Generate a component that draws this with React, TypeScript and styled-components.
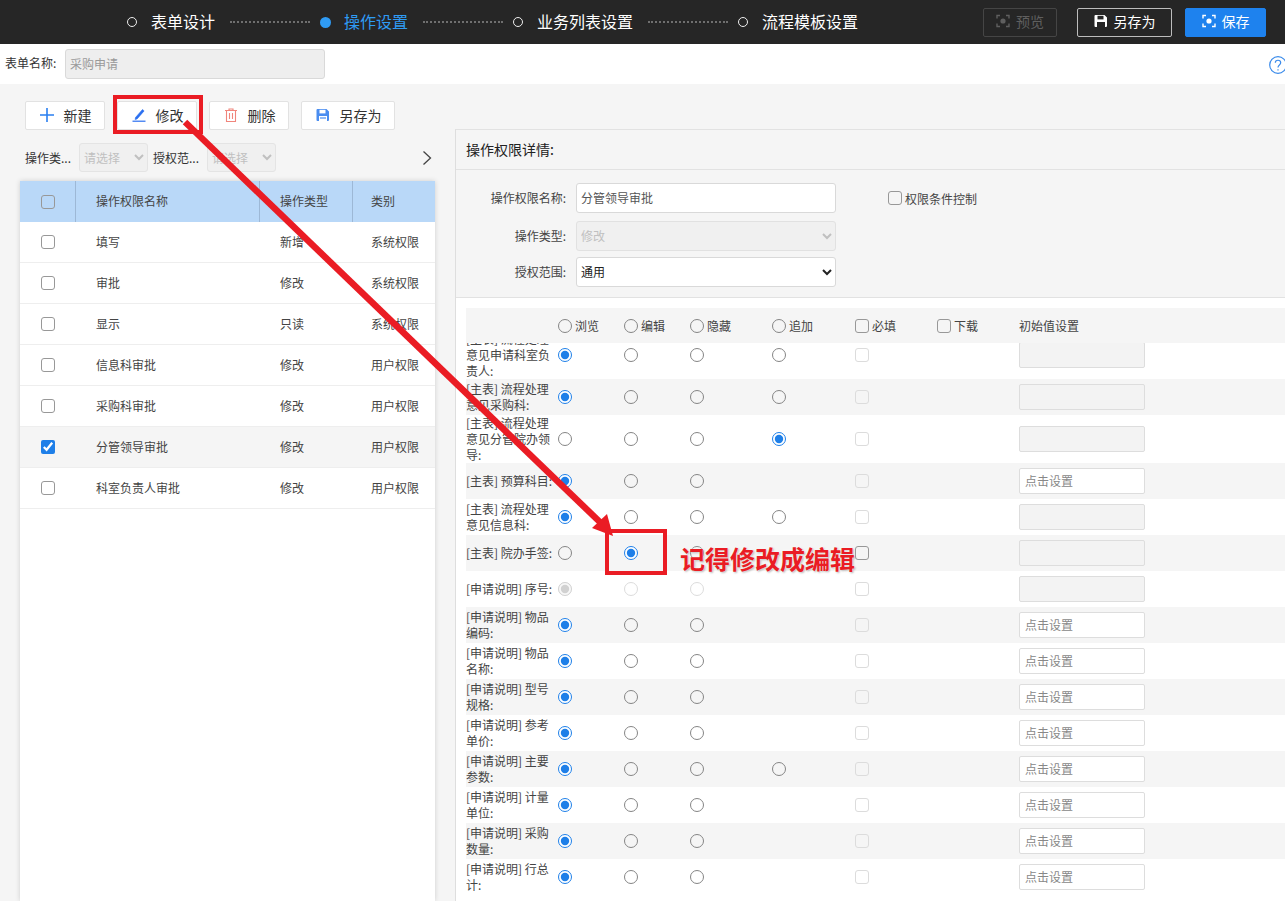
import styled, { createGlobalStyle } from 'styled-components';

const GlobalStyle = createGlobalStyle`
  html, body {
    margin: 0;
    padding: 0;
    background: #fff;
  }

  body, input, select, button {
    font-family: "Noto Sans CJK SC", "Noto Sans", sans-serif;
  }

  * {
    box-sizing: border-box;
  }
`;

type Step = { label: string; active?: boolean };
type PermissionRow = { name: string; type: string; category: string; selected?: boolean };
type FieldRow = {
  label: string;
  checked: number;
  radios: number;
  setting: boolean;
  disabled?: boolean;
  required?: boolean;
};

const steps: Step[] = [
  { label: '表单设计' },
  { label: '操作设置', active: true },
  { label: '业务列表设置' },
  { label: '流程模板设置' },
];

const permissions: PermissionRow[] = [
  { name: '填写', type: '新增', category: '系统权限' },
  { name: '审批', type: '修改', category: '系统权限' },
  { name: '显示', type: '只读', category: '系统权限' },
  { name: '信息科审批', type: '修改', category: '用户权限' },
  { name: '采购科审批', type: '修改', category: '用户权限' },
  { name: '分管领导审批', type: '修改', category: '用户权限', selected: true },
  { name: '科室负责人审批', type: '修改', category: '用户权限' },
];

const fields: FieldRow[] = [
  { label: '[主表] 流程处理意见申请科室负责人:', checked: 0, radios: 4, setting: false },
  { label: '[主表] 流程处理意见采购科:', checked: 0, radios: 4, setting: false },
  { label: '[主表] 流程处理意见分管院办领导:', checked: 3, radios: 4, setting: false },
  { label: '[主表] 预算科目:', checked: 0, radios: 3, setting: true },
  { label: '[主表] 流程处理意见信息科:', checked: 0, radios: 4, setting: false },
  { label: '[主表] 院办手签:', checked: 1, radios: 3, setting: false, required: true },
  { label: '[申请说明] 序号:', checked: 0, radios: 3, setting: false, disabled: true },
  { label: '[申请说明] 物品编码:', checked: 0, radios: 3, setting: true },
  { label: '[申请说明] 物品名称:', checked: 0, radios: 3, setting: true },
  { label: '[申请说明] 型号规格:', checked: 0, radios: 3, setting: true },
  { label: '[申请说明] 参考单价:', checked: 0, radios: 3, setting: true },
  { label: '[申请说明] 主要参数:', checked: 0, radios: 4, setting: true },
  { label: '[申请说明] 计量单位:', checked: 0, radios: 3, setting: true },
  { label: '[申请说明] 采购数量:', checked: 0, radios: 3, setting: true },
  { label: '[申请说明] 行总计:', checked: 0, radios: 3, setting: true },
];

const ScanIcon = () => (
  <svg width="14" height="14" viewBox="0 0 14 14" fill="none" stroke="currentColor" strokeWidth="1.4">
    <path d="M1 4.5V1.5h3M10 1.5h3v3M13 9.5v3h-3M4 12.5H1v-3" />
    <circle cx="7" cy="7" r="2.6" fill="currentColor" stroke="none" />
  </svg>
);

const SaveIcon = ({ color }: { color: string }) => (
  <svg width="14" height="14" viewBox="0 0 14 14">
    <path d="M1.5 1h9l2.5 2.5V12a1 1 0 0 1-1 1H1.5a1 1 0 0 1-1-1V2a1 1 0 0 1 1-1z" fill={color} />
    <rect x="3.5" y="1.8" width="6" height="3.6" fill="#fff" />
    <rect x="3" y="8" width="8" height="5" fill="#fff" />
    <rect x="4" y="9.4" width="6" height="1.2" fill={color} />
  </svg>
);

const PlusIcon = () => (
  <svg width="14" height="14" viewBox="0 0 14 14" stroke="#2a7ff0" strokeWidth="1.6">
    <path d="M7 0v14M0 7h14" />
  </svg>
);

const PenIcon = () => (
  <svg width="14" height="14" viewBox="0 0 14 14" fill="none" stroke="#2a6ff0">
    <path d="M3.5 9.5 10.5 1.5l1.6 1.4-7 8-2 .6z" fill="#2a6ff0" strokeWidth="0.6" />
    <path d="M0.5 13.2h13" strokeWidth="1.2" />
  </svg>
);

const TrashIcon = () => (
  <svg width="14" height="14" viewBox="0 0 14 14" fill="none" stroke="#f0857c" strokeWidth="1.1">
    <path d="M1 2.5h12M5 2.5V1h4v1.5M2.5 2.5v11h9v-11M5.5 5v6M8.5 5v6" />
  </svg>
);

const ChevronRight = () => (
  <svg width="10" height="16" viewBox="0 0 10 16" fill="none" stroke="#444" strokeWidth="1.3">
    <path d="M1.5 1.5 8.5 8l-7 6.5" />
  </svg>
);

const HelpIcon = () => (
  <svg width="18" height="20" viewBox="0 0 18 20" fill="none" stroke="#3b8bea" strokeWidth="1.2">
    <circle cx="9" cy="10" r="8.3" />
    <path d="M6.3 7.8c0-3.4 5.4-3.4 5.4 0 0 2.2-2.7 2.2-2.7 4.6" />
    <path d="M9 14.2v1.4" />
  </svg>
);

export default function App() {
  return (
    <Page>
      <GlobalStyle />

      <TopBar>
        <Stepper>
          {steps.map((step, index) => (
            <StepItem key={step.label}>
              {index > 0 && <StepLine />}
              <StepDot $active={step.active} />
              <StepLabel $active={step.active}>{step.label}</StepLabel>
            </StepItem>
          ))}
        </Stepper>
        <TopActions>
          <TopButton $variant="disabled">
            <ScanIcon />
            预览
          </TopButton>
          <TopButton $variant="outline">
            <SaveIcon color="#fff" />
            另存为
          </TopButton>
          <TopButton $variant="primary">
            <ScanIcon />
            保存
          </TopButton>
        </TopActions>
      </TopBar>

      <NameRow>
        <NameLabel>表单名称:</NameLabel>
        <NameInput disabled defaultValue="采购申请" />
        <HelpWrap>
          <HelpIcon />
        </HelpWrap>
      </NameRow>

      <Workspace>
        <LeftColumn>
          <Toolbar>
            <ToolButton $width={80}>
              <PlusIcon />
              新建
            </ToolButton>
            <ToolButton $width={80}>
              <PenIcon />
              修改
            </ToolButton>
            <ToolButton $width={80}>
              <TrashIcon />
              删除
            </ToolButton>
            <ToolButton $width={94}>
              <SaveIcon color="#4a8df0" />
              另存为
            </ToolButton>
          </Toolbar>

          <FilterRow>
            <FilterLabel>操作类...</FilterLabel>
            <FilterSelect disabled>
              <option>请选择</option>
            </FilterSelect>
            <FilterLabel>授权范...</FilterLabel>
            <FilterSelect disabled>
              <option>请选择</option>
            </FilterSelect>
            <FilterToggle>
              <ChevronRight />
            </FilterToggle>
          </FilterRow>

          <PermissionTable>
            <PermissionHead>
              <CheckCell $divider>
                <input type="checkbox" />
              </CheckCell>
              <HeadText $divider>操作权限名称</HeadText>
              <HeadText $divider>操作类型</HeadText>
              <HeadText>类别</HeadText>
            </PermissionHead>
            {permissions.map((row) => (
              <PermissionItem key={row.name} $selected={row.selected}>
                <CheckCell>
                  <input type="checkbox" defaultChecked={row.selected} />
                </CheckCell>
                <BodyText>{row.name}</BodyText>
                <BodyText>{row.type}</BodyText>
                <BodyText>{row.category}</BodyText>
              </PermissionItem>
            ))}
          </PermissionTable>
        </LeftColumn>

        <DetailPanel>
          <DetailTitle>操作权限详情:</DetailTitle>
          <DetailForm>
            <FormRow>
              <FormLabel>操作权限名称:</FormLabel>
              <FormInput defaultValue="分管领导审批" />
              <ConditionLabel>
                <input type="checkbox" />
                权限条件控制
              </ConditionLabel>
            </FormRow>
            <FormRow>
              <FormLabel>操作类型:</FormLabel>
              <FormSelect disabled>
                <option>修改</option>
              </FormSelect>
            </FormRow>
            <FormRow>
              <FormLabel>授权范围:</FormLabel>
              <FormSelect>
                <option>通用</option>
              </FormSelect>
            </FormRow>
          </DetailForm>

          <FieldArea>
            <FieldHead>
              <span />
              <HeadOption>
                <input type="radio" name="all" />
                浏览
              </HeadOption>
              <HeadOption>
                <input type="radio" name="all" />
                编辑
              </HeadOption>
              <HeadOption>
                <input type="radio" name="all" />
                隐藏
              </HeadOption>
              <HeadOption>
                <input type="radio" name="all" />
                追加
              </HeadOption>
              <HeadOption>
                <input type="checkbox" />
                必填
              </HeadOption>
              <HeadOption>
                <input type="checkbox" />
                下载
              </HeadOption>
              <span>初始值设置</span>
            </FieldHead>

            <FieldScroller>
              <FieldList>
                {fields.map((field, rowIndex) => (
                  <FieldItem key={field.label} $shaded={rowIndex % 2 === 1}>
                    <FieldLabel>{field.label}</FieldLabel>
                    {[0, 1, 2, 3].map((option) => (
                      <RadioCell key={option}>
                        {option < field.radios && (
                          <input
                            type="radio"
                            name={`field-${rowIndex}`}
                            defaultChecked={field.checked === option}
                            disabled={field.disabled}
                          />
                        )}
                      </RadioCell>
                    ))}
                    <RadioCell>
                      <input type="checkbox" disabled={!field.required} />
                    </RadioCell>
                    <span />
                    <SettingInput disabled={!field.setting} placeholder={field.setting ? '点击设置' : ''} />
                  </FieldItem>
                ))}
              </FieldList>
            </FieldScroller>
          </FieldArea>
        </DetailPanel>
      </Workspace>

      <Annotations width="1285" height="901" viewBox="0 0 1285 901">
        <rect x="115" y="97" width="86" height="35" fill="none" stroke="#ea1c24" strokeWidth="4" />
        <rect x="607" y="531" width="58" height="42" fill="none" stroke="#ea1c24" strokeWidth="4" />
        <line x1="185" y1="122" x2="604" y2="526" stroke="#ea1c24" strokeWidth="6.5" />
        <polygon points="613,536 592,528 607,514" fill="#ea1c24" />
      </Annotations>
      <AnnotationText>记得修改成编辑</AnnotationText>
    </Page>
  );
}

const Page = styled.div`
  position: relative;
  width: 1285px;
  height: 901px;
  overflow: hidden;
  display: flex;
  flex-direction: column;
  color: #333;
  font-size: 12px;

  input[type='checkbox'],
  input[type='radio'] {
    accent-color: #1e7fe8;
    margin: 0;
    width: 14px;
    height: 14px;
  }

  input[type='checkbox']:not(:checked),
  input[type='radio']:not(:checked) {
    appearance: none;
    background: transparent;
    border: 1px solid #858585;
  }

  input[type='checkbox']:not(:checked) {
    border-radius: 3px;
    border-color: #989898;
    border-width: 1.5px;
  }

  input[type='radio']:not(:checked) {
    border-radius: 50%;
  }

  input[type='checkbox']:disabled,
  input[type='radio']:disabled {
    border-color: #dcdcdc;
  }
`;

const TopBar = styled.header`
  height: 44px;
  flex: none;
  background: #262626;
  display: flex;
  align-items: center;
  padding: 0 19px 0 127px;
`;

const Stepper = styled.div`
  display: flex;
  align-items: center;
`;

const StepItem = styled.div`
  display: flex;
  align-items: center;
`;

const StepLine = styled.span`
  width: 80px;
  margin: 0 10px 0 15px;
  border-top: 2px dotted #6f6f6f;
`;

const StepDot = styled.span<{ $active?: boolean }>`
  width: ${(p) => (p.$active ? '11px' : '10px')};
  height: ${(p) => (p.$active ? '11px' : '10px')};
  border-radius: 50%;
  border: ${(p) => (p.$active ? 'none' : '1.5px solid #eee')};
  background: ${(p) => (p.$active ? '#2f9bf4' : 'transparent')};
  margin-right: ${(p) => (p.$active ? '13px' : '14px')};
`;

const StepLabel = styled.span<{ $active?: boolean }>`
  font-size: 16px;
  line-height: 42px;
  padding-bottom: 2px;
  color: ${(p) => (p.$active ? '#2f9bf4' : '#fff')};
`;

const TopActions = styled.div`
  margin-left: auto;
  display: flex;
  align-items: center;
  gap: 20px;

  button:last-child {
    margin-left: -7px;
  }
`;

const TopButton = styled.button<{ $variant: 'disabled' | 'outline' | 'primary' }>`
  height: 29px;
  padding: 0 0 2px;
  width: ${(p) => (p.$variant === 'outline' ? '95px' : p.$variant === 'primary' ? '81px' : '74px')};
  display: flex;
  align-items: center;
  justify-content: center;
  gap: 6px;
  font-size: 14px;
  border-radius: 2px;
  border: 1px solid
    ${(p) => (p.$variant === 'outline' ? '#bdbdbd' : p.$variant === 'primary' ? '#1e82ee' : '#454545')};
  background: ${(p) => (p.$variant === 'primary' ? '#1e82ee' : 'transparent')};
  color: ${(p) => (p.$variant === 'disabled' ? '#5f5f5f' : '#fff')};

  svg rect {
    fill: ${(p) => (p.$variant === 'outline' ? '#262626' : undefined)};
  }
`;

const NameRow = styled.div`
  height: 40px;
  flex: none;
  display: flex;
  align-items: center;
  padding-left: 5px;
  background: #fff;
`;

const NameLabel = styled.label`
  width: 60px;
  font-size: 12px;
  padding-bottom: 3px;
`;

const NameInput = styled.input`
  width: 260px;
  height: 30px;
  padding: 0 4px 2px;
  font-size: 12px;
  background: #eee;
  color: #999;
  border: 1px solid #d9d9d9;
  border-radius: 3px;
`;

const HelpWrap = styled.span`
  margin-left: auto;
  margin-right: -2px;
  display: flex;
  padding-top: 1px;
`;

const Workspace = styled.main`
  flex: 1;
  min-height: 0;
  display: flex;
  background: #f5f5f5;
`;

const LeftColumn = styled.section`
  width: 455px;
  flex: none;
  display: flex;
  flex-direction: column;
  padding: 17px 20px 0;
`;

const Toolbar = styled.div`
  display: flex;
  gap: 12px;
  padding-left: 5px;
`;

const ToolButton = styled.button<{ $width: number }>`
  width: ${(p) => p.$width}px;
  height: 29px;
  padding: 0 0 1px 1px;
  display: flex;
  align-items: center;
  justify-content: center;
  gap: 10px;
  font-size: 14px;
  color: #333;
  background: #fff;
  border: 1px solid #e2e2e2;
  border-radius: 2px;
`;

const FilterRow = styled.div`
  height: 29px;
  margin-top: 13px;
  padding-left: 5px;
  display: flex;
  align-items: center;
`;

const FilterLabel = styled.span`
  width: 54px;
  font-size: 12px;
  white-space: nowrap;
  padding-bottom: 1px;

  &:nth-of-type(2) {
    margin-left: 5px;
  }
`;

const FilterSelect = styled.select`
  width: 69px;
  height: 29px;
  padding: 0;
  font-size: 12px;
  color: #aaa;
  background: #eee;
  border: 1px solid #ddd;
  border-radius: 3px;
`;

const FilterToggle = styled.span`
  margin-left: auto;
  margin-right: 3px;
  display: flex;
`;

const PermissionTable = styled.div`
  flex: 1;
  margin-top: 9px;
  background: #fff;
  box-shadow: 0 0 5px rgba(0, 0, 0, 0.16);
`;

const PermissionHead = styled.div`
  height: 41px;
  display: grid;
  grid-template-columns: 56px 184px 93px 82px;
  background: #b9d8f8;
`;

const CheckCell = styled.div<{ $divider?: boolean }>`
  display: flex;
  align-items: center;
  justify-content: center;
  border-right: ${(p) => (p.$divider ? '1px solid #9db8d6' : 'none')};

  input:not(:checked) {
    background: ${(p) => (p.$divider ? 'transparent' : '#fff')};
  }
`;

const HeadText = styled.div<{ $divider?: boolean }>`
  display: flex;
  align-items: center;
  padding: 0 0 2px 20px;
  font-size: 12px;
  color: #444;
  border-right: ${(p) => (p.$divider ? '1px solid #9db8d6' : 'none')};

  &:nth-child(4) {
    padding-left: 18px;
  }
`;

const PermissionItem = styled.div<{ $selected?: boolean }>`
  height: 41px;
  display: grid;
  grid-template-columns: 56px 184px 93px 82px;
  border-bottom: 1px solid #eee;
  background: ${(p) => (p.$selected ? '#f5f5f5' : '#fff')};
`;

const BodyText = styled.div`
  display: flex;
  align-items: center;
  padding: 0 0 2px 20px;
  font-size: 12px;
  white-space: nowrap;
  color: #444;

  &:nth-child(4) {
    padding-left: 18px;
  }
`;

const DetailPanel = styled.section`
  flex: 1;
  min-width: 0;
  margin-top: 45px;
  border-left: 1px solid #dedede;
  border-top: 1px solid #e2e2e2;
  display: flex;
  flex-direction: column;
`;

const DetailTitle = styled.h2`
  height: 40px;
  flex: none;
  margin: 0;
  padding: 0 0 1px 10px;
  display: flex;
  align-items: center;
  font-size: 14px;
  font-weight: 400;
  color: #222;
  border-bottom: 1px solid #e2e2e2;
`;

const DetailForm = styled.div`
  height: 128px;
  flex: none;
  padding-top: 13px;
  display: flex;
  flex-direction: column;
  gap: 8px;
  border-bottom: 1px solid #e2e2e2;
`;

const FormRow = styled.div`
  display: flex;
  align-items: center;

  & + & + & {
    margin-top: -2px;
  }
`;

const FormLabel = styled.label`
  width: 110px;
  text-align: right;
  font-size: 12px;
  color: #444;
  margin-right: 10px;
  padding-bottom: 1px;
`;

const FormInput = styled.input`
  width: 260px;
  height: 30px;
  padding: 0 4px 2px;
  font-size: 12px;
  color: #555;
  background: #fff;
  border: 1px solid #d9d9d9;
  border-radius: 3px;
`;

const FormSelect = styled.select`
  width: 260px;
  height: 30px;
  padding: 0 0 2px;
  font-size: 12px;
  color: #222;
  background: #fff;
  border: 1px solid #d9d9d9;
  border-radius: 3px;

  &:disabled {
    background: #eee;
    color: #aaa;
  }
`;

const ConditionLabel = styled.label`
  margin-left: 52px;
  display: flex;
  align-items: center;
  gap: 3px;
  font-size: 12px;
  color: #444;
`;

const FieldArea = styled.div`
  flex: 1;
  min-height: 0;
  background: #fff;
  padding: 10px 0 0 10px;
  display: flex;
  flex-direction: column;
`;

const columns = '92px 66px 66px 82px 83px 82px 82px 126px 1fr';

const FieldHead = styled.div`
  height: 35px;
  flex: none;
  display: grid;
  grid-template-columns: ${columns};
  align-items: center;
  background: #f5f5f5;
  font-size: 12px;
  color: #444;
`;

const HeadOption = styled.label`
  display: flex;
  align-items: center;
  gap: 3px;
`;

const FieldScroller = styled.div`
  flex: 1;
  min-height: 0;
  overflow: hidden;
`;

const FieldList = styled.div`
  margin-top: -12px;
`;

const FieldItem = styled.div<{ $shaded: boolean }>`
  display: grid;
  grid-template-columns: ${columns};
  align-items: center;
  min-height: 36px;
  background: ${(p) => (p.$shaded ? '#f5f5f5' : '#fff')};
`;

const FieldLabel = styled.div`
  width: 90px;
  font-size: 12px;
  line-height: 16px;
  color: #444;
`;

const RadioCell = styled.div`
  display: flex;
  align-items: center;
  height: 100%;
`;

const SettingInput = styled.input`
  grid-column: 8;
  width: 126px;
  height: 26px;
  padding: 0 5px 2px;
  font-size: 12px;
  background: #fff;
  border: 1px solid #ddd;
  border-radius: 2px;

  &:disabled {
    background: #f3f3f3;
  }

  &::placeholder {
    color: #888;
  }
`;

const Annotations = styled.svg`
  position: absolute;
  left: 0;
  top: 0;
  pointer-events: none;
`;

const AnnotationText = styled.span`
  position: absolute;
  left: 680px;
  top: 540px;
  font-size: 25px;
  line-height: 36px;
  font-weight: 700;
  white-space: nowrap;
  color: #ea1c24;
  text-shadow: 0 0 3px #fff, 1px 1px 2px rgba(0, 0, 0, 0.35);
`;
